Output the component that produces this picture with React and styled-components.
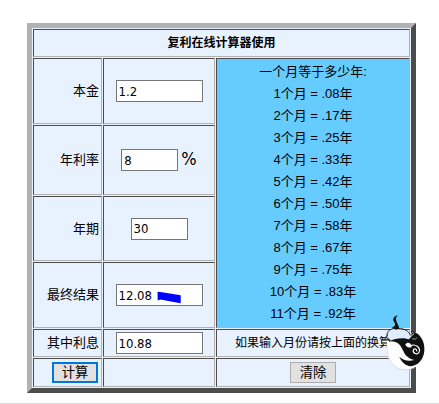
import React, { useState } from "react";
import styled, { createGlobalStyle } from "styled-components";

const GlobalStyle = createGlobalStyle`
  body {
    margin: 0;
    background: #fff;
    overflow: hidden;
  }
  * {
    box-sizing: border-box;
  }
`;

const Page = styled.main`
  position: relative;
  width: 439px;
  height: 404px;
  padding: 23px 0 0 27px;
  border-bottom: 1px solid #dcdcdc;
  color: #000;
  font: 13px/22px "Liberation Sans", "Noto Sans CJK SC", sans-serif;
`;

const Calculator = styled.form`
  display: grid;
  grid-template-columns: 69px 112px 194px;
  grid-template-rows: 28px 66px 70px 65px 66px 28px 29px;
  gap: 1px;
  width: 389px;
  padding: 1px;
  border: 5px solid;
  border-color: #b2b2b2 #4c4c4c #4c4c4c #b2b2b2;
  background: #e8f2ff;
`;

const Cell = styled.div`
  display: flex;
  align-items: center;
  justify-content: center;
  min-width: 0;
  border: 1px solid;
  border-color: #4c4c4c #b2b2b2 #b2b2b2 #4c4c4c;
  white-space: nowrap;
`;

const Title = styled(Cell)`
  grid-column: 1 / -1;
  font-size: 12px;
  font-weight: 700;
`;

const Label = styled(Cell)`
  justify-content: flex-end;
  padding-right: 2px;
`;

const SubmitCell = styled(Cell)`
  justify-content: flex-end;
  padding-right: 3px;
`;

const MonthList = styled(Cell)`
  grid-column: 3;
  grid-row: 2 / span 4;
  flex-direction: column;
  justify-content: flex-start;
  padding-top: 2px;
  background: #66ccff;
`;

const Note = styled(Cell)`
  font-size: 12px;
`;

const Field = styled.span`
  position: relative;
  display: flex;
`;

const Input = styled.input`
  width: ${({ $short }) => ($short ? 57 : 87)}px;
  height: 22px;
  margin: 0;
  padding: 1px 2px;
  border: 1px solid #767676;
  border-radius: 0;
  outline: 0;
  background: #fff;
  color: #000;
  font: 13px "DejaVu Sans Condensed", "Noto Sans", sans-serif;
`;

const Percent = styled.span`
  margin-left: 3px;
  font: 18px/19px "DejaVu Sans Condensed", "Noto Sans", sans-serif;
`;

const Button = styled.button`
  width: 46px;
  height: 21px;
  padding: 0;
  border: ${({ $primary }) => ($primary ? "2px solid #0078d7" : "1px solid #adadad")};
  border-radius: 0;
  background: #e1e1e1;
  color: #000;
  font: 13.33px/17px "Liberation Sans", "Noto Sans CJK SC", sans-serif;
`;

const PenMark = styled.svg`
  position: absolute;
  left: 41px;
  top: 7px;
  pointer-events: none;
`;

const Mascot = styled.svg`
  position: absolute;
  left: 384px;
  top: 312px;
  pointer-events: none;
`;

const months = [
  ".08", ".17", ".25", ".33", ".42", ".50", ".58", ".67", ".75", ".83", ".92",
];

function Entry({ initial, short, label, children }) {
  const [value, setValue] = useState(initial);
  return (
    <Field>
      <Input
        $short={short}
        aria-label={label}
        value={value}
        onChange={(event) => setValue(event.target.value)}
      />
      {children}
    </Field>
  );
}

function InkMascot() {
  return (
    <Mascot width="44" height="60" viewBox="0 0 132 180" aria-hidden="true">
      <path d="M12 78C7 96 5 117 12 135C23 164 45 174 67 173C100 172 122 145 122 111C121 84 105 65 91 59L76 81Z" fill="#fff" />
      <path d="M10 66C13 51 28 49 47 52C64 54 76 64 81 80C62 76 39 77 18 87L9 80Z" fill="#dfedff" />
      <path d="M41 9C28 15 24 21 31 31C36 40 33 42 23 48C32 53 40 54 46 50C45 40 36 31 36 22C36 17 38 13 41 9Z" fill="#111" />
      <path d="M10 73C8 61 15 52 26 51M43 50C61 48 74 58 80 70" fill="none" stroke="#222" strokeWidth="3" />
      <path d="M8 64C5 72 11 79 19 83L19 91L10 83Z" fill="#31261e" />
      <path d="M15 88C34 78 59 76 75 82L86 69C78 58 85 54 91 60C111 68 123 91 121 116C119 143 102 160 80 163C65 161 51 149 46 134C58 146 74 149 91 144C68 138 62 126 56 113C48 94 35 86 15 88Z" fill="#111" />
      <path d="M64 97C70 88 82 92 83 105C73 109 66 105 64 97Z" fill="#fff" />
      <path d="M81 67C83 58 91 61 89 67C86 72 83 68 83 66M84 80L94 82L99 76" fill="none" stroke="#ddd" strokeWidth="2" />
      <path d="M79 101C96 94 111 108 105 121C99 130 86 124 88 114C92 108 99 111 98 118" fill="none" stroke="#fff" strokeWidth="3.5" />
      <path d="M9 101C8 132 20 160 47 171C63 176 79 173 90 168" fill="none" stroke="#bbb" strokeWidth="1.5" />
    </Mascot>
  );
}

export default function App() {
  return (
    <>
      <GlobalStyle />
      <Page>
        <Calculator onSubmit={(event) => event.preventDefault()}>
          <Title>复利在线计算器使用</Title>
          <Label>本金</Label>
          <Cell><Entry label="本金" initial="1.2" /></Cell>
          <MonthList>
            <div>一个月等于多少年:</div>
            {months.map((value, index) => (
              <div key={value}>{`${index + 1}个月 = ${value}年`}</div>
            ))}
          </MonthList>
          <Label>年利率</Label>
          <Cell>
            <Entry label="年利率" initial="8" short>
              <Percent>%</Percent>
            </Entry>
          </Cell>
          <Label>年期</Label>
          <Cell><Entry label="年期" initial="30" short /></Cell>
          <Label>最终结果</Label>
          <Cell>
            <Entry label="最终结果" initial="12.08">
              <PenMark width="25" height="13" viewBox="0 0 25 13" aria-hidden="true">
                <path d="M0.5 0.7L3.5 1L23.7 4.3L23.7 12.3L18 11.3L3.5 8.6L0.7 9.5Z" fill="#0000ff" />
              </PenMark>
            </Entry>
          </Cell>
          <Label>其中利息</Label>
          <Cell><Entry label="其中利息" initial="10.88" /></Cell>
          <Note>如果输入月份请按上面的换算</Note>
          <SubmitCell><Button type="submit" $primary>计算</Button></SubmitCell>
          <Cell />
          <Cell><Button type="reset">清除</Button></Cell>
        </Calculator>
        <InkMascot />
      </Page>
    </>
  );
}
